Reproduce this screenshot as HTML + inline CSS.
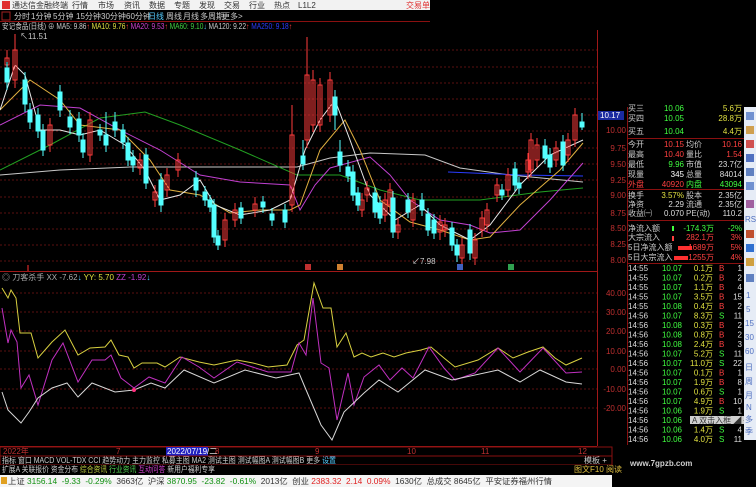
<!DOCTYPE html>
<html><head><meta charset="utf-8">
<style>
html,body{margin:0;padding:0;background:#000;width:756px;height:487px;overflow:hidden}
svg{display:block}
text{font-family:"Liberation Sans","Noto Sans CJK SC",sans-serif;font-size:8px}
</style></head><body>
<svg width="756" height="487" viewBox="0 0 756 487" xmlns="http://www.w3.org/2000/svg">
<rect width="756" height="487" fill="#000"/>
<g stroke="#5a0f0f" stroke-width="1" stroke-dasharray="2,2">
<line x1="0" y1="50" x2="597" y2="50"/><line x1="0" y1="67" x2="597" y2="67"/><line x1="0" y1="83" x2="597" y2="83"/><line x1="0" y1="99" x2="597" y2="99"/><line x1="0" y1="115" x2="597" y2="115"/><line x1="0" y1="131" x2="597" y2="131"/><line x1="0" y1="148" x2="597" y2="148"/><line x1="0" y1="164" x2="597" y2="164"/><line x1="0" y1="180" x2="597" y2="180"/><line x1="0" y1="197" x2="597" y2="197"/><line x1="0" y1="213" x2="597" y2="213"/><line x1="0" y1="229" x2="597" y2="229"/><line x1="0" y1="245" x2="597" y2="245"/><line x1="0" y1="261" x2="597" y2="261"/>
<line x1="0" y1="293" x2="597" y2="293"/><line x1="0" y1="312" x2="597" y2="312"/><line x1="0" y1="331" x2="597" y2="331"/><line x1="0" y1="351" x2="597" y2="351"/><line x1="0" y1="369" x2="597" y2="369"/><line x1="0" y1="389" x2="597" y2="389"/><line x1="0" y1="408" x2="597" y2="408"/>
</g>
<g fill="none" stroke-width="1">
<polyline stroke="#c8c8c8" points="0,175 60,170 130,167 297,167 330,158 370,153 425,155 460,168 510,175 583,182"/>
<polyline stroke="#2a3cff" points="448,172 520,175 583,176"/>
<polyline stroke="#22a022" points="0,170 50,145 100,118 145,112 180,125 240,150 297,175 340,175 380,190 420,200 480,200 540,192 583,188"/>
<polyline stroke="#c040d0" points="0,125 40,105 80,108 120,130 160,150 200,175 240,182 290,185 300,210 315,185 330,168 370,157 390,175 410,200 440,220 470,225 490,233 520,230 550,200 583,163"/>
<polyline stroke="#e0b040" points="0,110 30,80 60,100 80,125 120,130 150,160 170,190 200,195 230,213 260,210 290,210 300,205 320,150 345,120 360,150 380,200 410,222 440,230 470,240 490,237 520,205 560,170 583,143"/>
<polyline stroke="#e8e8e8" points="0,110 15,65 25,75 40,130 60,130 80,135 100,130 125,145 145,170 160,200 180,195 200,180 215,205 240,215 270,210 290,200 305,150 320,120 335,100 350,140 370,195 395,220 420,205 440,225 470,240 490,225 520,185 550,155 583,140"/>
</g>
<g stroke="#ff3c3c" fill="none" stroke-width="1">
<line x1="7" y1="50" x2="7" y2="72"/><rect x="5" y="58" width="4" height="7"/>
<line x1="15" y1="34" x2="15" y2="88"/><rect x="13" y="50" width="4" height="30"/>
<line x1="50" y1="118" x2="50" y2="152"/><rect x="48" y="125" width="4" height="20"/>
<line x1="90" y1="112" x2="90" y2="162"/><rect x="88" y="120" width="4" height="35"/>
<line x1="140" y1="153" x2="140" y2="175"/><rect x="138" y="160" width="4" height="8"/>
<line x1="155" y1="185" x2="155" y2="207"/><rect x="153" y="192" width="4" height="8"/>
<line x1="167" y1="168" x2="167" y2="197"/><rect x="165" y="175" width="4" height="15"/>
<line x1="178" y1="153" x2="178" y2="177"/><rect x="176" y="160" width="4" height="10"/>
<line x1="225" y1="213" x2="225" y2="247"/><rect x="223" y="220" width="4" height="20"/>
<line x1="235" y1="203" x2="235" y2="227"/><rect x="233" y="210" width="4" height="10"/>
<line x1="255" y1="197" x2="255" y2="217"/><rect x="253" y="204" width="4" height="6"/>
<line x1="292" y1="105" x2="292" y2="212"/><rect x="290" y="135" width="4" height="70"/>
<line x1="307" y1="37" x2="307" y2="148"/><rect x="305" y="75" width="4" height="65"/>
<line x1="313" y1="70" x2="313" y2="132"/><rect x="311" y="80" width="4" height="45"/>
<line x1="320" y1="78" x2="320" y2="132"/><rect x="318" y="85" width="4" height="40"/>
<line x1="330" y1="72" x2="330" y2="122"/><rect x="328" y="80" width="4" height="35"/>
<line x1="362" y1="193" x2="362" y2="217"/><rect x="360" y="200" width="4" height="10"/>
<line x1="367" y1="181" x2="367" y2="202"/><rect x="365" y="188" width="4" height="7"/>
<line x1="385" y1="193" x2="385" y2="222"/><rect x="383" y="200" width="4" height="15"/>
<line x1="390" y1="183" x2="390" y2="212"/><rect x="388" y="190" width="4" height="15"/>
<line x1="398" y1="218" x2="398" y2="239"/><rect x="396" y="225" width="4" height="7"/>
<line x1="413" y1="193" x2="413" y2="227"/><rect x="411" y="200" width="4" height="20"/>
<line x1="440" y1="215" x2="440" y2="240"/><rect x="438" y="222" width="4" height="10"/>
<line x1="445" y1="218" x2="445" y2="237"/><rect x="443" y="225" width="4" height="5"/>
<line x1="462" y1="238" x2="462" y2="265"/><rect x="460" y="245" width="4" height="13"/>
<line x1="475" y1="233" x2="475" y2="265"/><rect x="473" y="240" width="4" height="18"/>
<line x1="482" y1="211" x2="482" y2="237"/><rect x="480" y="218" width="4" height="12"/>
<line x1="487" y1="203" x2="487" y2="232"/><rect x="485" y="210" width="4" height="15"/>
<line x1="497" y1="178" x2="497" y2="202"/><rect x="495" y="185" width="4" height="10"/>
<line x1="508" y1="168" x2="508" y2="197"/><rect x="506" y="175" width="4" height="15"/>
<line x1="528" y1="153" x2="528" y2="179"/><rect x="526" y="160" width="4" height="12"/>
<line x1="531" y1="133" x2="531" y2="177"/><rect x="529" y="140" width="4" height="30"/>
<line x1="537" y1="138" x2="537" y2="167"/><rect x="535" y="145" width="4" height="15"/>
<line x1="556" y1="141" x2="556" y2="167"/><rect x="554" y="148" width="4" height="12"/>
<line x1="568" y1="133" x2="568" y2="162"/><rect x="566" y="140" width="4" height="15"/>
<line x1="575" y1="108" x2="575" y2="147"/><rect x="573" y="115" width="4" height="25"/>
</g>
<g stroke="#54ffff" fill="#54ffff" stroke-width="1">
<line x1="7" y1="62" x2="7" y2="90"/><rect x="5" y="68" width="4" height="14"/>
<line x1="25" y1="72" x2="25" y2="112"/><rect x="23" y="80" width="4" height="24"/>
<line x1="30" y1="103" x2="30" y2="129"/><rect x="28" y="110" width="4" height="12"/>
<line x1="38" y1="108" x2="38" y2="138"/><rect x="36" y="115" width="4" height="16"/>
<line x1="43" y1="124" x2="43" y2="156"/><rect x="41" y="131" width="4" height="19"/>
<line x1="60" y1="85" x2="60" y2="117"/><rect x="58" y="92" width="4" height="18"/>
<line x1="70" y1="110" x2="70" y2="134"/><rect x="68" y="117" width="4" height="10"/>
<line x1="79" y1="112" x2="79" y2="142"/><rect x="77" y="119" width="4" height="16"/>
<line x1="83" y1="133" x2="83" y2="158"/><rect x="81" y="140" width="4" height="12"/>
<line x1="100" y1="124" x2="100" y2="141"/><rect x="98" y="130" width="4" height="5"/>
<line x1="106" y1="112" x2="106" y2="152"/><rect x="104" y="135" width="4" height="10"/>
<line x1="115" y1="112" x2="115" y2="137"/><rect x="113" y="122" width="4" height="8"/>
<line x1="123" y1="124" x2="123" y2="149"/><rect x="121" y="130" width="4" height="12"/>
<line x1="128" y1="137" x2="128" y2="166"/><rect x="126" y="143" width="4" height="17"/>
<line x1="133" y1="150" x2="133" y2="172"/><rect x="131" y="157" width="4" height="8"/>
<line x1="146" y1="148" x2="146" y2="189"/><rect x="144" y="155" width="4" height="28"/>
<line x1="161" y1="173" x2="161" y2="212"/><rect x="159" y="180" width="4" height="25"/>
<line x1="196" y1="171" x2="196" y2="197"/><rect x="194" y="178" width="4" height="12"/>
<line x1="205" y1="186" x2="205" y2="206"/><rect x="203" y="192" width="4" height="8"/>
<line x1="210" y1="195" x2="210" y2="212"/><rect x="208" y="200" width="4" height="7"/>
<line x1="214" y1="199" x2="214" y2="243"/><rect x="212" y="205" width="4" height="32"/>
<line x1="218" y1="230" x2="218" y2="250"/><rect x="216" y="236" width="4" height="9"/>
<line x1="241" y1="202" x2="241" y2="224"/><rect x="239" y="208" width="4" height="10"/>
<line x1="263" y1="196" x2="263" y2="213"/><rect x="261" y="202" width="4" height="5"/>
<line x1="272" y1="208" x2="272" y2="226"/><rect x="270" y="214" width="4" height="6"/>
<line x1="285" y1="204" x2="285" y2="228"/><rect x="283" y="210" width="4" height="12"/>
<line x1="303" y1="140" x2="303" y2="170"/><rect x="301" y="156" width="4" height="8"/>
<line x1="335" y1="90" x2="335" y2="130"/><rect x="333" y="97" width="4" height="18"/>
<line x1="340" y1="140" x2="340" y2="172"/><rect x="338" y="152" width="4" height="13"/>
<line x1="348" y1="160" x2="348" y2="182"/><rect x="346" y="167" width="4" height="9"/>
<line x1="353" y1="165" x2="353" y2="201"/><rect x="351" y="172" width="4" height="23"/>
<line x1="358" y1="187" x2="358" y2="211"/><rect x="356" y="193" width="4" height="12"/>
<line x1="375" y1="187" x2="375" y2="218"/><rect x="373" y="193" width="4" height="19"/>
<line x1="380" y1="196" x2="380" y2="224"/><rect x="378" y="203" width="4" height="15"/>
<line x1="393" y1="191" x2="393" y2="238"/><rect x="391" y="198" width="4" height="34"/>
<line x1="408" y1="193" x2="408" y2="218"/><rect x="406" y="200" width="4" height="12"/>
<line x1="422" y1="193" x2="422" y2="216"/><rect x="420" y="200" width="4" height="10"/>
<line x1="428" y1="208" x2="428" y2="236"/><rect x="426" y="214" width="4" height="16"/>
<line x1="434" y1="214" x2="434" y2="239"/><rect x="432" y="220" width="4" height="13"/>
<line x1="452" y1="222" x2="452" y2="251"/><rect x="450" y="228" width="4" height="17"/>
<line x1="457" y1="239" x2="457" y2="262"/><rect x="455" y="245" width="4" height="10"/>
<line x1="470" y1="224" x2="470" y2="260"/><rect x="468" y="230" width="4" height="23"/>
<line x1="502" y1="184" x2="502" y2="200"/><rect x="500" y="190" width="4" height="5"/>
<line x1="515" y1="162" x2="515" y2="191"/><rect x="513" y="169" width="4" height="16"/>
<line x1="519" y1="177" x2="519" y2="194"/><rect x="517" y="183" width="4" height="5"/>
<line x1="545" y1="139" x2="545" y2="164"/><rect x="543" y="146" width="4" height="12"/>
<line x1="550" y1="148" x2="550" y2="173"/><rect x="548" y="155" width="4" height="12"/>
<line x1="563" y1="135" x2="563" y2="171"/><rect x="561" y="142" width="4" height="23"/>
<line x1="582" y1="113" x2="582" y2="130"/><rect x="580" y="122" width="4" height="5"/>
</g>
<text x="20" y="39" fill="#ccc">↖11.51</text>
<text x="412" y="264" fill="#ccc">↙7.98</text>
<rect x="305" y="264" width="6" height="6" fill="#c03030"/><rect x="337" y="264" width="6" height="6" fill="#d08030"/><rect x="457" y="264" width="6" height="6" fill="#4060c0"/><rect x="508" y="264" width="6" height="6" fill="#30a050"/>
<line x1="28" y1="265" x2="28" y2="271" stroke="#ff3030"/>
<line x1="0" y1="271.5" x2="597" y2="271.5" stroke="#a01818"/>
<line x1="0" y1="446.5" x2="597" y2="446.5" stroke="#a01818"/>
<line x1="597.5" y1="30" x2="597.5" y2="446" stroke="#a01818"/>
<g fill="none" stroke-width="1">
<polyline stroke="#d8d040" points="2,288 8,298 11,290 16,298 20,333 31,333 38,358 52,342 65,330 78,355 90,348 105,347 111,340 119,355 128,357 134,368 142,363 157,363 165,367 180,357 199,362 214,365 237,360 253,363 268,367 287,365 297,345 304,340 314,283 323,308 331,308 337,347 346,333 354,357 362,353 371,357 383,353 394,357 406,353 421,350 431,347 444,358 455,367 478,360 498,348 513,358 528,352 543,347 555,358 566,365 582,358"/>
<polyline stroke="#c030c0" points="2,308 8,343 11,330 17,342 21,388 29,375 38,405 52,360 63,343 78,382 92,360 105,360 111,355 121,378 134,388 149,377 165,383 182,357 199,367 214,378 237,362 268,372 291,372 299,343 306,355 313,298 321,363 329,368 337,420 348,373 354,405 364,377 379,365 390,380 402,368 413,378 429,347 444,368 455,380 475,373 498,348 520,372 543,348 566,373 582,372"/>
<polyline stroke="#d8d8d8" points="2,392 8,410 21,423 29,412 38,398 52,388 67,383 78,397 92,383 115,392 134,390 151,383 165,388 184,370 214,383 245,370 276,378 299,373 304,385 321,425 332,440 344,412 364,393 379,380 398,392 425,370 452,380 498,370 520,382 540,370 566,382 582,384"/>
</g>
<circle cx="134" cy="390" r="2" fill="#ff3080"/>
<text x="2" y="280" fill="#aaa">◎ 刀客杀手 XX -7.62<tspan fill="#5cf">↓</tspan> <tspan fill="#e0e040">YY: 5.70</tspan> <tspan fill="#c040d0">ZZ -1.92</tspan><tspan fill="#5cf">↓</tspan></text>
<g fill="#c03030" text-anchor="end">
<text x="626" y="296">40.00</text><text x="626" y="315">30.00</text><text x="626" y="334">20.00</text><text x="626" y="354">10.00</text><text x="626" y="372">0.00</text><text x="626" y="392">-10.00</text><text x="626" y="411">-20.00</text>
<text x="626" y="133">10.00</text><text x="626" y="151">9.75</text><text x="626" y="167">9.50</text><text x="626" y="183">9.25</text><text x="626" y="198">9.00</text><text x="626" y="216">8.75</text><text x="626" y="231">8.50</text><text x="626" y="247">8.25</text><text x="626" y="263">8.00</text>
</g>
<rect x="598" y="111" width="26" height="9" fill="#1a2aa0"/><text x="600" y="118" fill="#fff">10.17</text>
<g stroke="#8a1010" fill="none">
<line x1="627.5" y1="107" x2="627.5" y2="445"/>
<line x1="627" y1="138.5" x2="744" y2="138.5"/><line x1="627" y1="189.5" x2="744" y2="189.5"/><line x1="627" y1="220.5" x2="744" y2="220.5"/><line x1="627" y1="263.5" x2="744" y2="263.5"/>
</g>
<g fill="#ccc" font-size="9">
<text x="628" y="111">买三</text><text x="628" y="121">买四</text><text x="628" y="134">买五</text>
<text x="628" y="147">今开</text><text x="628" y="157">最高</text><text x="628" y="167">最低</text><text x="628" y="177">现量</text><text x="628" y="187" fill="#ff4040">外盘</text>
<text x="686" y="147">均价</text><text x="686" y="157">量比</text><text x="686" y="167">市值</text><text x="686" y="177">总量</text><text x="686" y="187" fill="#40ff40">内盘</text>
<text x="628" y="198">换手</text><text x="628" y="207">净资</text><text x="628" y="216">收益㈠</text>
<text x="686" y="198">股本</text><text x="686" y="207">流通</text><text x="686" y="216">PE(动)</text>
<text x="628" y="231">净流入额</text><text x="628" y="240">大宗流入</text><text x="628" y="250">5日净流入额</text><text x="628" y="260">5日大宗流入</text>
</g>
<g text-anchor="end" font-size="8">
<text x="684" y="111" fill="#40ff40">10.06</text><text x="684" y="121" fill="#40ff40">10.05</text><text x="684" y="134" fill="#40ff40">10.04</text>
<text x="742" y="111" fill="#e0e040">5.6万</text><text x="742" y="121" fill="#e0e040">28.8万</text><text x="742" y="134" fill="#e0e040">4.4万</text>
<text x="684" y="147" fill="#ff4040">10.15</text><text x="684" y="157" fill="#ff4040">10.40</text><text x="684" y="167" fill="#40ff40">9.96</text><text x="684" y="177" fill="#fff">345</text><text x="684" y="187" fill="#ff4040">40920</text>
<text x="742" y="147" fill="#ff4040">10.16</text><text x="742" y="157" fill="#ff4040">1.54</text><text x="742" y="167" fill="#ddd">23.7亿</text><text x="742" y="177" fill="#ddd">84014</text><text x="742" y="187" fill="#40ff40">43094</text>
<text x="684" y="198" fill="#e0e040">3.57%</text><text x="684" y="207" fill="#ddd">2.29</text><text x="684" y="216" fill="#ddd">0.070</text>
<text x="742" y="198" fill="#ddd">2.35亿</text><text x="742" y="207" fill="#ddd">2.35亿</text><text x="742" y="216" fill="#ddd">110.2</text>
<text x="714" y="231" fill="#40ff40">-174.3万</text><text x="714" y="240" fill="#ff4040">282.1万</text><text x="714" y="250" fill="#ff4040">1689万</text><text x="714" y="260" fill="#ff4040">1255万</text>
<text x="742" y="231" fill="#40ff40">-2%</text><text x="742" y="240" fill="#ff4040">3%</text><text x="742" y="250" fill="#ff4040">5%</text><text x="742" y="260" fill="#ff4040">4%</text>
</g>
<rect x="672" y="226" width="2" height="5" fill="#40ff40"/><rect x="672" y="236" width="2" height="5" fill="#ff4040"/><rect x="678" y="246" width="14" height="4" fill="#ff3030"/><rect x="674" y="256" width="14" height="4" fill="#ff3030"/>
<g font-size="8">
<g fill="#ddd"><text x="628" y="271">14:55</text><text x="628" y="280.5">14:55</text><text x="628" y="290">14:55</text><text x="628" y="299.5">14:55</text><text x="628" y="309">14:55</text><text x="628" y="318.5">14:56</text><text x="628" y="328">14:56</text><text x="628" y="337.5">14:56</text><text x="628" y="347">14:56</text><text x="628" y="356.5">14:56</text><text x="628" y="366">14:56</text><text x="628" y="375.5">14:56</text><text x="628" y="385">14:56</text><text x="628" y="394.5">14:56</text><text x="628" y="404">14:56</text><text x="628" y="413.5">14:56</text><text x="628" y="423">14:56</text><text x="628" y="432.5">14:56</text><text x="628" y="442">14:56</text></g>
<g fill="#40ff40" text-anchor="end"><text x="682" y="271">10.07</text><text x="682" y="280.5">10.07</text><text x="682" y="290">10.07</text><text x="682" y="299.5">10.07</text><text x="682" y="309">10.08</text><text x="682" y="318.5">10.07</text><text x="682" y="328">10.08</text><text x="682" y="337.5">10.08</text><text x="682" y="347">10.08</text><text x="682" y="356.5">10.07</text><text x="682" y="366">10.07</text><text x="682" y="375.5">10.07</text><text x="682" y="385">10.07</text><text x="682" y="394.5">10.07</text><text x="682" y="404">10.07</text><text x="682" y="413.5">10.06</text><text x="682" y="423">10.06</text><text x="682" y="432.5">10.06</text><text x="682" y="442">10.06</text></g>
<g fill="#e0e040" text-anchor="end"><text x="713" y="271">0.1万</text><text x="713" y="280.5">0.2万</text><text x="713" y="290">1.1万</text><text x="713" y="299.5">3.5万</text><text x="713" y="309">0.4万</text><text x="713" y="318.5">8.3万</text><text x="713" y="328">0.3万</text><text x="713" y="337.5">0.8万</text><text x="713" y="347">2.4万</text><text x="713" y="356.5">5.2万</text><text x="713" y="366">11.0万</text><text x="713" y="375.5">0.1万</text><text x="713" y="385">1.9万</text><text x="713" y="394.5">0.6万</text><text x="713" y="404">4.9万</text><text x="713" y="413.5">1.9万</text><text x="713" y="423">1.0万</text><text x="713" y="432.5">1.4万</text><text x="713" y="442">4.0万</text></g>
<g fill="#ff4040"><text x="719" y="271">B</text><text x="719" y="280.5">B</text><text x="719" y="290">B</text><text x="719" y="299.5">B</text><text x="719" y="309">B</text><text x="719" y="318.5" fill="#40ff40">S</text><text x="719" y="328">B</text><text x="719" y="337.5">B</text><text x="719" y="347">B</text><text x="719" y="356.5" fill="#40ff40">S</text><text x="719" y="366" fill="#40ff40">S</text><text x="719" y="375.5">B</text><text x="719" y="385">B</text><text x="719" y="394.5" fill="#40ff40">S</text><text x="719" y="404">B</text><text x="719" y="413.5" fill="#40ff40">S</text><text x="719" y="423" fill="#40ff40">S</text><text x="719" y="432.5" fill="#40ff40">S</text><text x="719" y="442" fill="#40ff40">S</text></g>
<g fill="#ddd" text-anchor="end"><text x="742" y="271">1</text><text x="742" y="280.5">2</text><text x="742" y="290">4</text><text x="742" y="299.5">15</text><text x="742" y="309">2</text><text x="742" y="318.5">11</text><text x="742" y="328">2</text><text x="742" y="337.5">2</text><text x="742" y="347">3</text><text x="742" y="356.5">11</text><text x="742" y="366">22</text><text x="742" y="375.5">1</text><text x="742" y="385">8</text><text x="742" y="394.5">1</text><text x="742" y="404">10</text><text x="742" y="413.5">1</text><text x="742" y="423">2</text><text x="742" y="432.5">4</text><text x="742" y="442">11</text></g>
</g>
<rect x="690" y="416" width="55" height="8" fill="#d0d0d0"/><text x="692" y="423" fill="#333" font-size="7">A 双击入框 ◢ ─ □</text>
<rect x="744" y="107" width="12" height="333" fill="#e6ecf6"/>
<g fill="#5070c0"><rect x="746" y="112" width="8" height="8" fill="#7090d0"/><rect x="746" y="126" width="8" height="8" fill="#d0a050"/><rect x="746" y="140" width="8" height="8" fill="#d05050"/><rect x="746" y="154" width="8" height="8"/><rect x="746" y="168" width="8" height="8" fill="#6080c0"/><rect x="746" y="182" width="8" height="8" fill="#7090d0"/><rect x="746" y="200" width="8" height="8" fill="#a060a0"/><text x="745" y="222" font-size="6">RSI</text><rect x="746" y="230" width="8" height="8" fill="#c05030"/><rect x="746" y="244" width="8" height="8" fill="#3070d0"/><rect x="746" y="258" width="8" height="8" fill="#d0a040"/><rect x="746" y="274" width="8" height="8" fill="#6080c0"/>
<text x="746" y="298" font-size="7">1</text><text x="746" y="312" font-size="7">5</text><text x="745" y="326" font-size="6">15</text><text x="745" y="340" font-size="6">30</text><text x="745" y="354" font-size="6">60</text><text x="745" y="370" font-size="8">日</text><text x="745" y="384" font-size="8">周</text><text x="745" y="398" font-size="8">月</text><text x="746" y="410" font-size="7">N</text><text x="745" y="422" font-size="8">多</text><text x="745" y="434" font-size="8">季</text></g>
<rect x="0" y="0" width="430" height="10" fill="#f2f2f2"/>
<rect x="2" y="1" width="8" height="8" fill="#e03030"/>
<g font-size="7.5" fill="#333"><text x="12" y="8">通达信金融终端</text><text x="72" y="8">行情</text><text x="98" y="8">市场</text><text x="124" y="8">资讯</text><text x="149" y="8">数据</text><text x="174" y="8">专题</text><text x="199" y="8">发现</text><text x="224" y="8">交易</text><text x="249" y="8">行业</text><text x="274" y="8">热点</text><text x="298" y="8">L1L2</text><text x="406" y="8" fill="#e03030">交易单</text></g>
<rect x="2" y="12" width="8" height="8" fill="none" stroke="#a02020"/>
<g font-size="7.5" fill="#ccc"><text x="14" y="19">分时</text><text x="31" y="19">1分钟</text><text x="53" y="19">5分钟</text><text x="76" y="19">15分钟</text><text x="101" y="19">30分钟</text><text x="126" y="19">60分钟</text><text x="148" y="19" fill="#5cf">日线</text><text x="166" y="19">周线</text><text x="183" y="19">月线</text><text x="200" y="19">多周期</text><text x="222" y="19">更多&gt;</text></g>
<line x1="0" y1="21.5" x2="430" y2="21.5" stroke="#8a1010"/>
<text x="2" y="29" font-size="7.5" fill="#ccc" textLength="290" lengthAdjust="spacingAndGlyphs">安记食品(日线) ⊕ MA5: 9.86<tspan fill="#ff4040">↑</tspan> <tspan fill="#e0e040">MA10: 9.76</tspan><tspan fill="#ff4040">↑</tspan> <tspan fill="#d040d0">MA20: 9.53</tspan><tspan fill="#ff4040">↑</tspan> <tspan fill="#40d040">MA60: 9.10</tspan><tspan fill="#5cf">↓</tspan> MA120: 9.22<tspan fill="#ff4040">↑</tspan> <tspan fill="#2a3cff">MA250: 9.18</tspan><tspan fill="#ff4040">↑</tspan></text>
<rect x="0" y="447" width="612" height="9" fill="#000" stroke="#8a1010"/>
<g font-size="7" fill="#c03030"><text x="3" y="454">2022年</text><text x="116" y="454">7</text><text x="215" y="454">8</text><text x="315" y="454">9</text><text x="407" y="454">10</text><text x="481" y="454">11</text><text x="578" y="454">12</text></g>
<rect x="166" y="447" width="42" height="9" fill="#2020c0"/><text x="167" y="454" font-size="7" fill="#fff">2022/07/19/二</text>
<rect x="0" y="456" width="612" height="9" fill="#000" stroke="#8a1010"/>
<text x="2" y="463" font-size="7" fill="#ccc" xml:space="preserve" textLength="334" lengthAdjust="spacingAndGlyphs">指标 窗口 MACD VOL-TDX CCI 趋势动力 主力监控 私募主图 MA2 测试主图 测试幅图A 测试幅图B 更多 <tspan fill="#5cf">设置</tspan></text>
<text x="584" y="463" font-size="7" fill="#ccc">模板  +</text>
<rect x="0" y="465" width="612" height="9" fill="#000"/>
<text x="2" y="472" font-size="7" fill="#ccc" xml:space="preserve" textLength="213" lengthAdjust="spacingAndGlyphs">扩展A 关联报价 资金分布 <tspan fill="#c0d040">综合资讯</tspan> <tspan fill="#50d050">行业资讯</tspan> <tspan fill="#d040d0">互动问答</tspan> 新用户福利专享</text>
<text x="574" y="472" font-size="7" fill="#e0c040">图文F10 阅读</text>
<rect x="0" y="475" width="612" height="12" fill="#f4f4f4"/>
<rect x="1" y="477" width="6" height="7" fill="#e0a020"/>
<text x="8" y="484" font-size="8" fill="#333" xml:space="preserve" textLength="544" lengthAdjust="spacingAndGlyphs">上证 <tspan fill="#109010">3156.14  -9.33  -0.29%</tspan>  3663亿  沪深 <tspan fill="#109010">3870.95  -23.82  -0.61%</tspan>  2013亿  创业 <tspan fill="#e02020">2383.32  2.14  0.09%</tspan>  1630亿  总成交 8645亿  平安证券福州行情</text>
<text x="630" y="466" font-size="12" fill="#cfcfcf" font-weight="bold">www.7gpzb.com</text>
</svg>
</body></html>
